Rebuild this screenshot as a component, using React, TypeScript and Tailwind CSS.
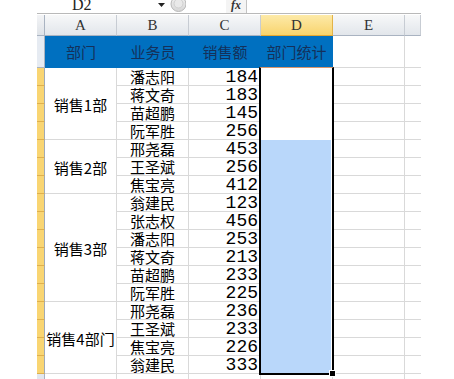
import React from "react";

const rows: { name: string; val: number }[] = [
  { name: "潘志阳", val: 184 },
  { name: "蒋文奇", val: 183 },
  { name: "苗超鹏", val: 145 },
  { name: "阮军胜", val: 256 },
  { name: "邢尧磊", val: 453 },
  { name: "王圣斌", val: 256 },
  { name: "焦宝亮", val: 412 },
  { name: "翁建民", val: 123 },
  { name: "张志权", val: 456 },
  { name: "潘志阳", val: 253 },
  { name: "蒋文奇", val: 213 },
  { name: "苗超鹏", val: 233 },
  { name: "阮军胜", val: 225 },
  { name: "邢尧磊", val: 236 },
  { name: "王圣斌", val: 233 },
  { name: "焦宝亮", val: 226 },
  { name: "翁建民", val: 333 },
];

const groups = [
  { label: "销售1部", start: 3, span: 4 },
  { label: "销售2部", start: 7, span: 3 },
  { label: "销售3部", start: 10, span: 6 },
  { label: "销售4部门", start: 16, span: 4 },
];

const cjk = "font-['Noto_Sans_CJK_SC',sans-serif]";

export default function App() {
  return (
    <div className="relative w-[454px] h-[379px] overflow-hidden bg-white">
      {/* top formula bar */}
      <div className="flex h-[13px] items-start">
        <div className="w-[72px]" />
        <div className="w-[20px] -mt-[3px] font-['Liberation_Serif',serif] text-[16px] leading-[16px] text-[#222]">
          D2
        </div>
        <div className="w-[66px]" />
        <svg width="8" height="6" viewBox="0 0 8 6" className="mt-[3px]">
          <polygon points="0,0 7,0 3.5,4" fill="#222" />
        </svg>
        <div className="w-[4px]" />
        <svg width="16" height="13" viewBox="0 0 16 13">
          <defs>
            <linearGradient id="g1" x1="0" y1="0" x2="0" y2="1">
              <stop offset="0" stopColor="#f2f2f2" />
              <stop offset="1" stopColor="#d6d6d6" />
            </linearGradient>
          </defs>
          <circle cx="8.5" cy="4" r="7.5" fill="url(#g1)" stroke="#b8b8b8" />
          <circle cx="8.5" cy="3.5" r="4.5" fill="#e9e9e9" stroke="#cfcfcf" />
        </svg>
        <div className="w-[40px]" />
        <div className="flex h-[13px] w-[21px] items-start justify-center border-r border-[#c3c3c3] bg-[#f4f4f4]">
          <span className="-mt-[1px] font-['Liberation_Serif',serif] text-[12px] font-bold italic leading-[13px] text-[#333]">
            fx
          </span>
        </div>
      </div>
      <div className="ml-[37px] h-px w-[384px] bg-[#b9b9b9]" />
      <div className="h-px" />

      {/* sheet grid */}
      <div className="ml-[37px] grid w-[384px] grid-cols-[8px_72px_72px_72px_72px_72px_16px] grid-rows-[21px_32px_repeat(17,18px)_10px]">
        {/* column header row */}
        <div className="border-r border-b border-[#a9b3c1] bg-gradient-to-b from-[#f3f4f6] to-[#dfe3e8]" />
        {["A", "B", "C", "D", "E", ""].map((c, i) => (
          <div
            key={i}
            className={
              "flex items-center justify-center border-r border-b font-['Liberation_Serif',serif] text-[15px] leading-[16px] text-[#333] " +
              (c === "D"
                ? "border-r-[#e3b348] border-b-[#e5a832] bg-gradient-to-b from-[#fdeaa8] to-[#f8d46c]"
                : "border-r-[#c7ccd3] border-b-[#a9b3c1] bg-gradient-to-b from-[#f7f8f9] to-[#e2e6eb]")
            }
          >
            {c}
          </div>
        ))}

        {/* row 2: blue header */}
        <div className="border-r border-b border-[#a9b3c1] bg-[#e6ebf2]" />
        {["部门", "业务员", "销售额", "部门统计"].map((t, i) => (
          <div
            key={t}
            className={
              "flex items-center justify-center bg-[#0070c0] text-[15px] leading-[18px] text-[#14305a] " +
              cjk +
              (i < 3 ? " border-b border-[#0070c0]" : " border-b border-r border-[#0070c0]")
            }
          >
            {t}
          </div>
        ))}
        <div className="border-r border-b border-[#d9d9d9]" />
        <div className="border-b border-[#d9d9d9]" />

        {/* row headers for data rows */}
        {rows.map((_, i) => (
          <div
            key={"rh" + i}
            className="border-r border-b border-r-[#9fa9b6] border-b-[#dfb04e] bg-[#f9d572]"
            style={{ gridColumn: 1, gridRow: i + 3 }}
          />
        ))}
        <div
          className="border-r border-[#a9b3c1] bg-[#e2e7ee]"
          style={{ gridColumn: 1, gridRow: 20 }}
        />

        {/* merged department cells */}
        {groups.map((g) => (
          <div
            key={g.label}
            className={
              "flex items-center justify-center border-r border-b border-[#d9d9d9] pt-[2px] text-[15px] leading-[16px] text-black whitespace-nowrap " +
              cjk
            }
            style={{ gridColumn: 2, gridRow: `${g.start} / span ${g.span}` }}
          >
            {g.label}
          </div>
        ))}

        {/* names, values, D, E, F */}
        {rows.map((r, i) => (
          <React.Fragment key={"r" + i}>
            <div
              className={
                "flex items-start justify-center border-r border-b border-[#d9d9d9] pt-[1px] text-[15px] leading-[16px] text-black " +
                cjk
              }
              style={{ gridColumn: 3, gridRow: i + 3 }}
            >
              {r.name}
            </div>
            <div
              className="flex items-start justify-end border-r border-b border-[#d9d9d9] pt-[2px] pr-[2px] font-['Liberation_Mono',monospace] text-[18px] leading-[15px] text-black"
              style={{ gridColumn: 4, gridRow: i + 3 }}
            >
              {r.val}
            </div>
            <div
              className="border-r border-b border-[#d9d9d9]"
              style={{ gridColumn: 5, gridRow: i + 3 }}
            />
            <div
              className="border-r border-b border-[#d9d9d9]"
              style={{ gridColumn: 6, gridRow: i + 3 }}
            />
            <div
              className="border-b border-[#d9d9d9]"
              style={{ gridColumn: 7, gridRow: i + 3 }}
            />
          </React.Fragment>
        ))}
        {[2, 3, 4, 5, 6].map((c) => (
          <div
            key={"b" + c}
            className="border-r border-[#d9d9d9]"
            style={{ gridColumn: c, gridRow: 20 }}
          />
        ))}
      </div>

      {/* selection overlay */}
      <div className="absolute left-[259px] top-[67px] h-[308px] w-[75px] border-2 border-t border-black border-t-[#d8966c] bg-white">
        <div className="absolute left-0 right-[1px] top-[72px] bottom-0 bg-[#b9d7fa]" />
      </div>
      <div className="absolute left-[329px] top-[370px] h-[7px] w-[7px] border border-white bg-black" />
    </div>
  );
}
